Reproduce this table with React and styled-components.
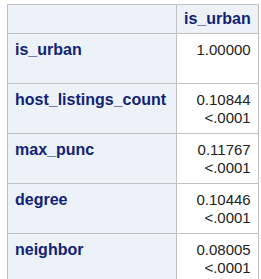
import React from "react";
import styled, { createGlobalStyle } from "styled-components";

const Global = createGlobalStyle`
  html, body { margin: 0; padding: 0; background: #ffffff; }
  body { font-family: "Liberation Sans", Arial, sans-serif; }
`;

const Page = styled.div`
  padding: 4px 0 0 7px;
`;

const Table = styled.table`
  border-collapse: collapse;
  border: 1px solid #c1c1c1;
  font-family: "Liberation Sans", Arial, sans-serif;
`;

const HeadCell = styled.th`
  background: #edf2f9;
  color: #112277;
  font-weight: bold;
  font-size: 16px;
  line-height: 18px;
  border: 1px solid #c1c1c1;
  padding: ${(p) => (p.$head ? "5px 7px 5px 7px" : "7px 7px 6px 7px")};
  text-align: ${(p) => (p.$align || "left")};
  vertical-align: top;
  width: ${(p) => p.$w}px;
  height: ${(p) => p.$h}px;
  box-sizing: border-box;
  white-space: nowrap;
`;

const DataCell = styled.td`
  background: #ffffff;
  color: #222222;
  font-size: 15px;
  line-height: 18px;
  border: 1px solid #c1c1c1;
  padding: 7px 7px 6px 7px;
  text-align: right;
  vertical-align: top;
  box-sizing: border-box;
  white-space: nowrap;
`;

const Line = styled.div`
  height: 18px;
`;

const rows = [
  { name: "is_urban", r: "1.00000", p: "" },
  { name: "host_listings_count", r: "0.10844", p: "<.0001" },
  { name: "max_punc", r: "0.11767", p: "<.0001" },
  { name: "degree", r: "0.10446", p: "<.0001" },
  { name: "neighbor", r: "0.08005", p: "<.0001" },
];

export default function App() {
  return (
    <Page>
      <Global />
      <Table>
        <thead>
          <tr>
            <HeadCell $head $w={169} $h={29}></HeadCell>
            <HeadCell $head $w={80} $h={29} $align="right">is_urban</HeadCell>
          </tr>
        </thead>
        <tbody>
          {rows.map((row) => (
            <tr key={row.name}>
              <HeadCell $h={49} scope="row">{row.name}</HeadCell>
              <DataCell>
                <Line>{row.r}</Line>
                <Line>{row.p}</Line>
              </DataCell>
            </tr>
          ))}
        </tbody>
      </Table>
    </Page>
  );
}
